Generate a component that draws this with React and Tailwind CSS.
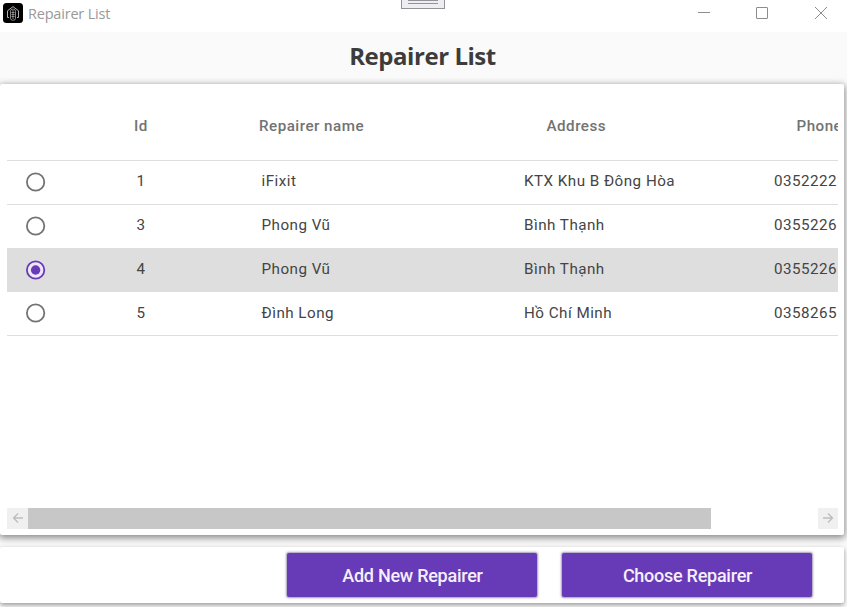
const rows = [
  { id: 1, name: "iFixit", address: "KTX Khu B Đông Hòa", phone: "0352222" },
  { id: 3, name: "Phong Vũ", address: "Bình Thạnh", phone: "0355226" },
  { id: 4, name: "Phong Vũ", address: "Bình Thạnh", phone: "0355226", selected: true },
  { id: 5, name: "Đình Long", address: "Hồ Chí Minh", phone: "0358265" },
];

const columns = "grid w-[831px] grid-cols-[127px_127px_263px_250px_64px] overflow-hidden";

function AppIcon() {
  return (
    <svg width="20" height="20" viewBox="0 0 20 20" fill="none" stroke="#c4c4c4">
      <rect width="20" height="20" rx="3.5" fill="#000" stroke="none" />
      <path d="M6 14.500H4.500V7.800L10 3.600l5.500 4.200v6.700H14" strokeWidth="0.900" />
      <rect x="7.500" y="6.200" width="5" height="11" rx="2" strokeWidth="0.800" stroke="#a8a8a8" />
      <path d="M10 7v9M8.500 9.500h3M8.500 11.500h3M8.500 13.500h3" strokeWidth="0.800" stroke="#a8a8a8" />
    </svg>
  );
}

function TitleBar() {
  return (
    <header className="flex h-8 justify-between bg-white">
      <div className="flex w-[401px] items-start pl-[3px] pt-[3px]">
        <AppIcon />
        <span className="ml-[5px] mt-px font-['Open_Sans',sans-serif] text-[14.5px] leading-5 tracking-[-0.2px] text-[#999]">
          Repairer List
        </span>
      </div>
      <div className="flex h-[9px] w-11 flex-col items-center border border-t-0 border-[#929298] bg-[#eeeef2]">
        <div className="h-px w-[30px] bg-[#929298]" />
        <div className="mt-[2px] h-px w-[30px] bg-[#929298]" />
      </div>
      <svg width="402" height="32" viewBox="445 0 402 32" fill="none" stroke="#8c8c8c">
        <path d="M698 12.500h12" />
        <rect x="756.500" y="7.500" width="11" height="11" rx="0.500" />
        <path d="M815 7l12 12M827 7l-12 12" />
      </svg>
    </header>
  );
}

function Radio({ checked }) {
  return (
    <svg width="20" height="20" viewBox="0 0 20 20" fill="none">
      <circle cx="9.600" cy="10" r="8.700" strokeWidth="1.800" stroke={checked ? "#673ab7" : "#737373"} fill={checked ? "#eee6f8" : "none"} />
      {checked && <circle cx="9.600" cy="10" r="4.700" fill="#673ab7" />}
    </svg>
  );
}

function Row({ row }) {
  return (
    <div className={`${columns} h-[43.75px] border-b border-[#dedede] ${row.selected ? "bg-[#dedede]" : ""}`}>
      <div className="pl-[19px] pt-[11px]"><Radio checked={row.selected} /></div>
      <div className="pl-[2.5px] pt-[10.4px]">{row.id}</div>
      <div className="pl-[0.5px] pt-[10.4px]">{row.name}</div>
      <div className="w-[151px] overflow-hidden whitespace-nowrap pt-[10.4px]">{row.address}</div>
      <div className="pt-[10.4px]">{row.phone}</div>
    </div>
  );
}

function ScrollBar() {
  return (
    <div className="flex h-[21px] w-[831px]">
      <div className="flex w-[21px] justify-center bg-[#f0f0f0] pt-1">
        <svg width="12" height="12" viewBox="0 0 12 12" fill="none" stroke="#bdbdbd" strokeWidth="1.300">
          <path d="M11 6H2M6 1.500L1.500 6 6 10.500" />
        </svg>
      </div>
      <div className="w-[683px] bg-[#c7c7c7]" />
      <div className="grow" />
      <div className="flex w-5 justify-center bg-[#f0f0f0] pt-1">
        <svg width="12" height="12" viewBox="0 0 12 12" fill="none" stroke="#bdbdbd" strokeWidth="1.300">
          <path d="M1 6h9M6 1.500L10.500 6 6 10.500" />
        </svg>
      </div>
    </div>
  );
}

function Button({ children }) {
  return (
    <button className="h-11 w-[250px] rounded-[2px] bg-[#673ab7] pl-px pt-px font-[Roboto,sans-serif] text-[18px] font-medium leading-6 tracking-[-0.26px] text-[#f5effc] shadow-[0_0_2px_1px_rgba(70,50,110,0.5)]">
      {children}
    </button>
  );
}

export default function App() {
  return (
    <div className="flex h-[607px] w-[847px] flex-col overflow-hidden bg-[#fafafa]">
      <TitleBar />
      <h1 className="h-[52px] pr-[2px] pt-2 text-center font-['Open_Sans',sans-serif] text-[24px] font-bold leading-8 tracking-[-0.45px] text-[#3c3c3c]">
        Repairer List
      </h1>
      <main className="flex h-[451px] w-[844px] shrink-0 flex-col rounded-[2px] bg-white pl-[7px] font-[Roboto,sans-serif] text-[15.2px] leading-5 tracking-[0.48px] text-[#444] shadow-[0_2px_7px_1px_rgba(0,0,0,0.45)]">
        <div className={`${columns} h-[77px] border-b border-[#dedede] pt-8 font-medium text-[#737373]`}>
          <div />
          <div>Id</div>
          <div className="-ml-[2px]">Repairer name</div>
          <div className="pl-[22.5px]">Address</div>
          <div className="pl-[22.5px]">Phone</div>
        </div>
        {rows.map((row) => <Row key={row.id} row={row} />)}
        <div className="mt-auto pb-[6px]"><ScrollBar /></div>
      </main>
      <footer className="mt-3 flex h-14 w-[844px] shrink-0 items-start justify-end gap-[25px] rounded-[2px] bg-white pr-8 pt-[6px] shadow-[0_2px_5px_0_rgba(0,0,0,0.4)]">
        <Button>Add New Repairer</Button>
        <Button>Choose Repairer</Button>
      </footer>
    </div>
  );
}
